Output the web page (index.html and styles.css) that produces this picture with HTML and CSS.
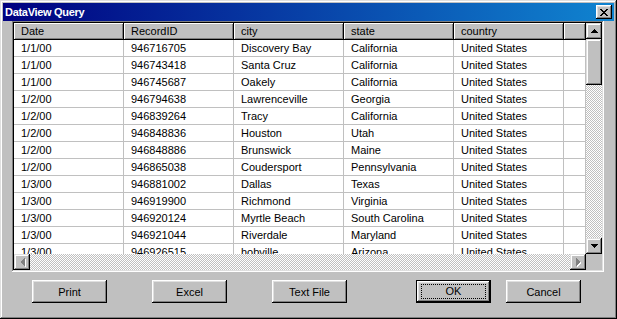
FILE: index.html
```html
<!DOCTYPE html>
<html lang="en">
<head>
  <meta charset="UTF-8" />
  <title>DataView Query</title>
  <link rel="stylesheet" href="styles.css">
</head>
<body>
  <div class="window">
    <div class="titlebar">
      <span class="title">DataView Query</span>
      <div class="close-btn">
        <svg width="8" height="7" viewBox="0 0 8 7" shape-rendering="crispEdges">
          <path d="M0 0h2v1h-2zM6 0h2v1h-2zM1 1h2v1h-2zM5 1h2v1h-2zM2 2h4v1h-4zM3 3h2v1h-2zM2 4h4v1h-4zM1 5h2v1h-2zM5 5h2v1h-2zM0 6h2v1h-2zM6 6h2v1h-2z" fill="#000"/>
        </svg>
      </div>
    </div>

    <div class="listview">
      <div class="lv-grid">
        <div class="lv-table">
          <div class="lv-head">
            <div class="hd-cell">Date</div>
            <div class="hd-cell">RecordID</div>
            <div class="hd-cell">city</div>
            <div class="hd-cell">state</div>
            <div class="hd-cell">country</div>
            <div class="hd-cell hd-fill"></div>
          </div>
          <div class="row"><div class="cell">1/1/00</div><div class="cell">946716705</div><div class="cell">Discovery Bay</div><div class="cell">California</div><div class="cell">United States</div><div class="cell fill"></div></div>
          <div class="row"><div class="cell">1/1/00</div><div class="cell">946743418</div><div class="cell">Santa Cruz</div><div class="cell">California</div><div class="cell">United States</div><div class="cell fill"></div></div>
          <div class="row"><div class="cell">1/1/00</div><div class="cell">946745687</div><div class="cell">Oakely</div><div class="cell">California</div><div class="cell">United States</div><div class="cell fill"></div></div>
          <div class="row"><div class="cell">1/2/00</div><div class="cell">946794638</div><div class="cell">Lawrenceville</div><div class="cell">Georgia</div><div class="cell">United States</div><div class="cell fill"></div></div>
          <div class="row"><div class="cell">1/2/00</div><div class="cell">946839264</div><div class="cell">Tracy</div><div class="cell">California</div><div class="cell">United States</div><div class="cell fill"></div></div>
          <div class="row"><div class="cell">1/2/00</div><div class="cell">946848836</div><div class="cell">Houston</div><div class="cell">Utah</div><div class="cell">United States</div><div class="cell fill"></div></div>
          <div class="row"><div class="cell">1/2/00</div><div class="cell">946848886</div><div class="cell">Brunswick</div><div class="cell">Maine</div><div class="cell">United States</div><div class="cell fill"></div></div>
          <div class="row"><div class="cell">1/2/00</div><div class="cell">946865038</div><div class="cell">Coudersport</div><div class="cell">Pennsylvania</div><div class="cell">United States</div><div class="cell fill"></div></div>
          <div class="row"><div class="cell">1/3/00</div><div class="cell">946881002</div><div class="cell">Dallas</div><div class="cell">Texas</div><div class="cell">United States</div><div class="cell fill"></div></div>
          <div class="row"><div class="cell">1/3/00</div><div class="cell">946919900</div><div class="cell">Richmond</div><div class="cell">Virginia</div><div class="cell">United States</div><div class="cell fill"></div></div>
          <div class="row"><div class="cell">1/3/00</div><div class="cell">946920124</div><div class="cell">Myrtle Beach</div><div class="cell">South Carolina</div><div class="cell">United States</div><div class="cell fill"></div></div>
          <div class="row"><div class="cell">1/3/00</div><div class="cell">946921044</div><div class="cell">Riverdale</div><div class="cell">Maryland</div><div class="cell">United States</div><div class="cell fill"></div></div>
          <div class="row"><div class="cell">1/3/00</div><div class="cell">946926515</div><div class="cell">hobville</div><div class="cell">Arizona</div><div class="cell">United States</div><div class="cell fill"></div></div>
        </div>

        <div class="vscroll">
          <div class="sb-btn">
            <svg width="7" height="4" viewBox="0 0 7 4" shape-rendering="crispEdges"><path d="M3 0h1v1h-1zM2 1h3v1h-3zM1 2h5v1h-5zM0 3h7v1h-7z" fill="#000"/></svg>
          </div>
          <div class="sb-thumb"></div>
          <div class="sb-track"></div>
          <div class="sb-btn">
            <svg width="7" height="4" viewBox="0 0 7 4" shape-rendering="crispEdges"><path d="M0 0h7v1h-7zM1 1h5v1h-5zM2 2h3v1h-3zM3 3h1v1h-1z" fill="#000"/></svg>
          </div>
        </div>

        <div class="hscroll">
          <div class="sb-btn">
            <svg width="5" height="8" viewBox="0 0 5 8" shape-rendering="crispEdges"><path d="M4 0h1v1h-1zM3 1h2v1h-2zM2 2h3v1h-3zM1 3h4v2h-4zM2 5h3v1h-3zM3 6h2v1h-2zM4 7h1v1h-1z" fill="#808080"/></svg>
          </div>
          <div class="sb-track"></div>
          <div class="sb-btn">
            <svg width="5" height="8" viewBox="0 0 5 8" shape-rendering="crispEdges"><path d="M0 0h1v1h-1zM0 1h2v1h-2zM0 2h3v1h-3zM0 3h4v2h-4zM0 5h3v1h-3zM0 6h2v1h-2zM0 7h1v1h-1z" fill="#808080"/></svg>
          </div>
        </div>
        <div class="corner"></div>
      </div>
    </div>

    <div class="button-row">
      <button class="btn btn-print">Print</button>
      <button class="btn btn-excel">Excel</button>
      <button class="btn btn-text">Text File</button>
      <button class="btn btn-ok"><span class="focus">OK</span></button>
      <button class="btn btn-cancel">Cancel</button>
    </div>
  </div>
</body>
</html>
```

FILE: styles.css
```css
body {
  margin: 0;
  padding: 0;
  background-color: #c0c0c0;
  font-family: 'Liberation Sans', Arial, sans-serif;
  font-size: 11px;
  color: #000;
}

.window {
  width: 617px;
  height: 319px;
  box-sizing: border-box;
  padding: 3px;
  background: #c0c0c0;
  box-shadow: inset -1px -1px #000, inset 1px 1px #dfdfdf, inset -2px -2px #808080, inset 2px 2px #fff;
  display: flex;
  flex-direction: column;
}

.titlebar {
  height: 18px;
  background: linear-gradient(to right, #000080, #1084d0);
  display: flex;
  align-items: center;
  justify-content: space-between;
  padding: 0 2px 0 2px;
}

.title {
  color: #fff;
  font-weight: bold;
  font-size: 11px;
  letter-spacing: -0.3px;
}

.close-btn {
  width: 16px;
  height: 14px;
  box-sizing: border-box;
  background: #c0c0c0;
  box-shadow: inset -1px -1px #000, inset 1px 1px #fff, inset -2px -2px #808080, inset 2px 2px #dfdfdf;
  display: flex;
  align-items: center;
  justify-content: center;
  padding-right: 1px;
}

/* list view */
.listview {
  width: 592px;
  height: 251px;
  box-sizing: border-box;
  margin-left: 9px;
  padding: 2px;
  background: #fff;
  box-shadow: inset -1px -1px #fff, inset 1px 1px #808080, inset -2px -2px #dfdfdf, inset 2px 2px #000;
}

.lv-grid {
  display: grid;
  grid-template-columns: 572px 16px;
  grid-template-rows: 231px 16px;
}

.lv-table {
  overflow: hidden;
  background: #fff;
}

.lv-head {
  display: flex;
  height: 17px;
}

.hd-cell {
  width: 110px;
  height: 17px;
  box-sizing: border-box;
  background: #c0c0c0;
  border-right: 1px solid #000;
  border-bottom: 1px solid #000;
  box-shadow: inset 1px 1px #fff, inset -1px -1px #808080;
  padding-left: 7px;
  line-height: 16px;
}

.hd-fill {
  width: 22px;
}

.row {
  display: flex;
  height: 17px;
}

.cell {
  width: 110px;
  box-sizing: border-box;
  border-right: 1px solid #c0c0c0;
  border-bottom: 1px solid #c0c0c0;
  padding-left: 7px;
  line-height: 16px;
  white-space: nowrap;
  overflow: hidden;
}

.cell.fill {
  width: 22px;
}

/* scrollbars */
.vscroll {
  display: flex;
  flex-direction: column;
}

.hscroll {
  display: flex;
}

.sb-btn {
  width: 16px;
  height: 16px;
  flex: none;
  box-sizing: border-box;
  background: #c0c0c0;
  box-shadow: inset -1px -1px #000, inset 1px 1px #dfdfdf, inset -2px -2px #808080, inset 2px 2px #fff;
  display: flex;
  align-items: center;
  justify-content: center;
}

.hscroll .sb-btn svg {
  filter: drop-shadow(1px 1px 0 #fff);
}

.sb-thumb {
  height: 46px;
  flex: none;
  background: #c0c0c0;
  box-shadow: inset -1px -1px #000, inset 1px 1px #dfdfdf, inset -2px -2px #808080, inset 2px 2px #fff;
}

.sb-track {
  flex: 1;
  background: repeating-conic-gradient(#c0c0c0 0 25%, #fff 0 50%) 0 0 / 2px 2px;
}

.corner {
  background: #c0c0c0;
}

/* buttons */
.button-row {
  display: flex;
  margin-top: 8px;
  padding-left: 29px;
}

.btn {
  width: 75px;
  height: 23px;
  box-sizing: border-box;
  border: none;
  padding: 0;
  font-family: 'Liberation Sans', Arial, sans-serif;
  font-size: 11px;
  color: #000;
  background: #c0c0c0;
  box-shadow: inset -1px -1px #000, inset 1px 1px #fff, inset -2px -2px #808080, inset 2px 2px #dfdfdf;
}

.btn-excel {
  margin-left: 45px;
}

.btn-text {
  margin-left: 45px;
}

.btn-ok {
  margin-left: 69px;
  border: 1px solid #000;
  display: flex;
  align-items: center;
  justify-content: center;
}

.btn-cancel {
  margin-left: 15px;
}

.focus {
  width: 65px;
  height: 15px;
  box-sizing: border-box;
  border: 1px dotted #000;
  line-height: 13px;
}
```
